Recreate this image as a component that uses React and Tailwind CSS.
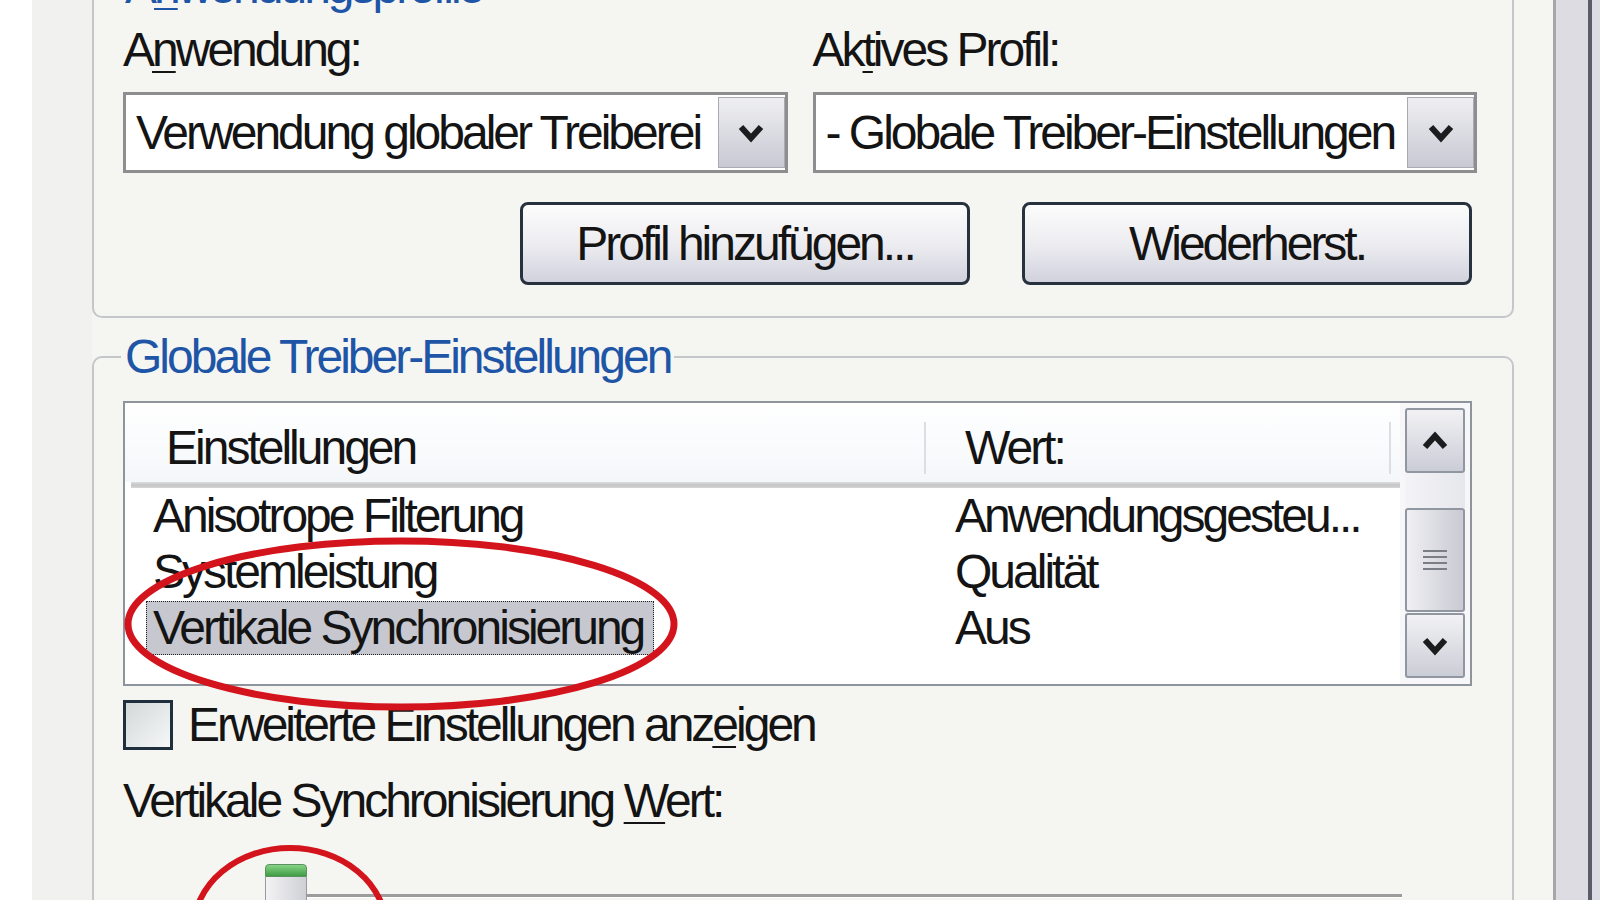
function Chevron({ up = false }) {
  return (
    <svg width="30" height="20" viewBox="0 0 30 20">
      <polyline
        points={up ? "5,16 15,5 25,16" : "5,4 15,15 25,4"}
        fill="none"
        stroke="#1c1c1e"
        strokeWidth="6"
      />
    </svg>
  );
}

function Combo({ text }) {
  return (
    <div className="mt-[18px] flex h-[81px] border-[3px] border-[#8e8e90] bg-white p-[2px] pr-[0px]">
      <div className="flex flex-1 items-center overflow-hidden whitespace-nowrap pl-[8px]">
        {text}
      </div>
      <div className="flex w-[67px] items-center justify-center border border-[#a9abb3] bg-gradient-to-b from-[#efeff3] to-[#c8c9d2]">
        <Chevron />
      </div>
    </div>
  );
}

function DialogButton({ children }) {
  return (
    <button className="h-[83px] w-[450px] rounded-[8px] border-[3px] border-[#28323e] bg-gradient-to-b from-[#fcfcfc] via-[#ededf1] to-[#d1d2dd] text-center">
      {children}
    </button>
  );
}

function ScrollButton({ up }) {
  return (
    <div className="flex h-[65px] items-center justify-center rounded-[3px] border-2 border-[#9197a0] bg-gradient-to-b from-[#f2f2f5] to-[#cbcdd6]">
      <Chevron up={up} />
    </div>
  );
}

const rows = [
  { name: "Anisotrope Filterung", value: "Anwendungsgesteu..." },
  { name: "Systemleistung", value: "Qualität" },
  { name: "Vertikale Synchronisierung", value: "Aus", selected: true },
];

export default function App() {
  return (
    <div className="relative flex h-[900px] w-[1600px] overflow-hidden bg-white text-[48px] leading-[48px] tracking-[-3px] text-[#141414] [font-family:'Liberation_Sans',Arial,sans-serif]">
      <div className="w-[32px] shrink-0 bg-white" />
      <div className="w-[60px] shrink-0 bg-[#f1f1ef]" />

      <main className="flex w-[1461px] shrink-0 flex-col bg-[#f5f5f2]">
        {/* Anwendungsprofile */}
        <fieldset className="-mt-[37px] w-[1422px] rounded-[10px] border-2 border-[#c4c7ca] pb-[31px] pl-[29px] pr-[35px]">
          <legend className="ml-[-2px] px-[4px] text-[#1f55a6]">
            A<u className="decoration-2 underline-offset-[5px]">n</u>wendungsprofile
          </legend>

          <div className="grid grid-cols-2 gap-x-[25px] pt-[15px]">
            <div>
              <div>
                A<u className="decoration-2 underline-offset-[5px]">n</u>wendung:
              </div>
              <Combo text="Verwendung globaler Treiberei" />
            </div>
            <div>
              <div>
                Ak<u className="decoration-2 underline-offset-[5px]">t</u>ives Profil:
              </div>
              <Combo text="- Globale Treiber-Einstellungen" />
            </div>
          </div>

          <div className="mt-[29px] flex justify-end gap-[52px] pr-[5px]">
            <DialogButton>Profil hinzufügen...</DialogButton>
            <DialogButton>Wiederherst.</DialogButton>
          </div>
        </fieldset>

        {/* Globale Treiber-Einstellungen */}
        <fieldset className="mt-[15px] w-[1422px] rounded-[10px] border-2 border-[#c4c7ca] pb-[60px] pl-[29px] pr-[40px]">
          <legend className="ml-[-2px] px-[4px] text-[#1f55a6]">Globale Treiber-Einstellungen</legend>

          <div className="mt-[20px] flex h-[285px] w-[1349px] border-2 border-[#8d949b] bg-white">
            <div className="flex min-w-0 flex-1 flex-col">
              <div className="flex h-[79px] items-center bg-gradient-to-b from-white to-[#f4f7fa] pt-[10px]">
                <div className="w-[799px] pl-[41px]">Einstellungen</div>
                <div className="h-[52px] w-[2px] bg-[#dcdfe2]" />
                <div className="w-[463px] pl-[39px]">Wert:</div>
                <div className="h-[52px] w-[2px] bg-[#dcdfe2]" />
              </div>
              <div className="ml-[6px] h-[6px] bg-gradient-to-b from-[#dedede] via-[#c4c4c4] to-[#d6d6d6]" />

              {rows.map((row) => (
                <div key={row.name} className="flex h-[56px] items-center whitespace-nowrap">
                  <div className="flex w-[801px] items-center">
                    {row.selected ? (
                      <span className="ml-[21px] flex h-[54px] items-center border border-dotted border-[#222] bg-[#c7c7cf] pl-[6px] pr-[10px]">
                        {row.name}
                      </span>
                    ) : (
                      <span className="pl-[28px]">{row.name}</span>
                    )}
                  </div>
                  <div className="pl-[29px]">{row.value}</div>
                </div>
              ))}
            </div>

            <div className="flex w-[70px] flex-col bg-[#f7f7f9] px-[5px] pt-[5px]">
              <ScrollButton up />
              <div className="h-[35px] bg-gradient-to-r from-[#f4f4f7] to-[#e6e7ec]" />
              <div className="flex h-[104px] flex-col items-center justify-center gap-[4px] rounded-[3px] border-2 border-[#9197a0] bg-gradient-to-r from-[#f0f0f3] to-[#c9cad3]">
                <div className="h-[2px] w-[24px] bg-[#7c7e86]" />
                <div className="h-[2px] w-[24px] bg-[#7c7e86]" />
                <div className="h-[2px] w-[24px] bg-[#7c7e86]" />
                <div className="h-[2px] w-[24px] bg-[#7c7e86]" />
              </div>
              <div className="mt-[1px]">
                <ScrollButton />
              </div>
            </div>
          </div>

          <div className="mt-[14px] flex items-center gap-[15px]">
            <div className="h-[50px] w-[50px] border-[3px] border-[#1f2f3e] bg-gradient-to-br from-[#d3d8d8] to-[#f6f8f8]" />
            <div>
              Erweiterte Einstellungen anz<u className="decoration-2 underline-offset-[5px]">e</u>igen
            </div>
          </div>

          <div className="mt-[27px]">
            Vertikale Synchronisierung <u className="decoration-2 underline-offset-[5px]">W</u>ert:
          </div>

          <div className="mt-[39px] flex h-[60px]">
            <div className="ml-[142px] flex w-[42px] flex-col">
              <div className="h-[13px] rounded-t-[4px] border border-[#5d8f5f] bg-gradient-to-b from-[#86d486] to-[#3f9c45]" />
              <div className="flex-1 border-x border-[#9a9a9e] bg-gradient-to-r from-[#f3f3f5] to-[#cfd0d6]" />
            </div>
            <div className="mt-[30px] h-[4px] w-[1095px] border-b border-white bg-[#9c9c9c]" />
          </div>
        </fieldset>
      </main>

      <div className="w-[3px] shrink-0 bg-[#a6a6a8]" />
      <div className="w-[32px] shrink-0 bg-[#dcdce2]" />
      <div className="w-[4px] shrink-0 bg-[#5c5c68]" />
      <div className="w-[8px] shrink-0 bg-[#dcdce4]" />

      {/* red markings drawn over the screenshot */}
      <svg className="pointer-events-none absolute inset-0" width="1600" height="900" viewBox="0 0 1600 900">
        <ellipse cx="401" cy="624" rx="273" ry="83" fill="none" stroke="#d3141c" strokeWidth="7" />
        <ellipse cx="290" cy="928" rx="96" ry="80" fill="none" stroke="#d3141c" strokeWidth="6" />
      </svg>
    </div>
  );
}
